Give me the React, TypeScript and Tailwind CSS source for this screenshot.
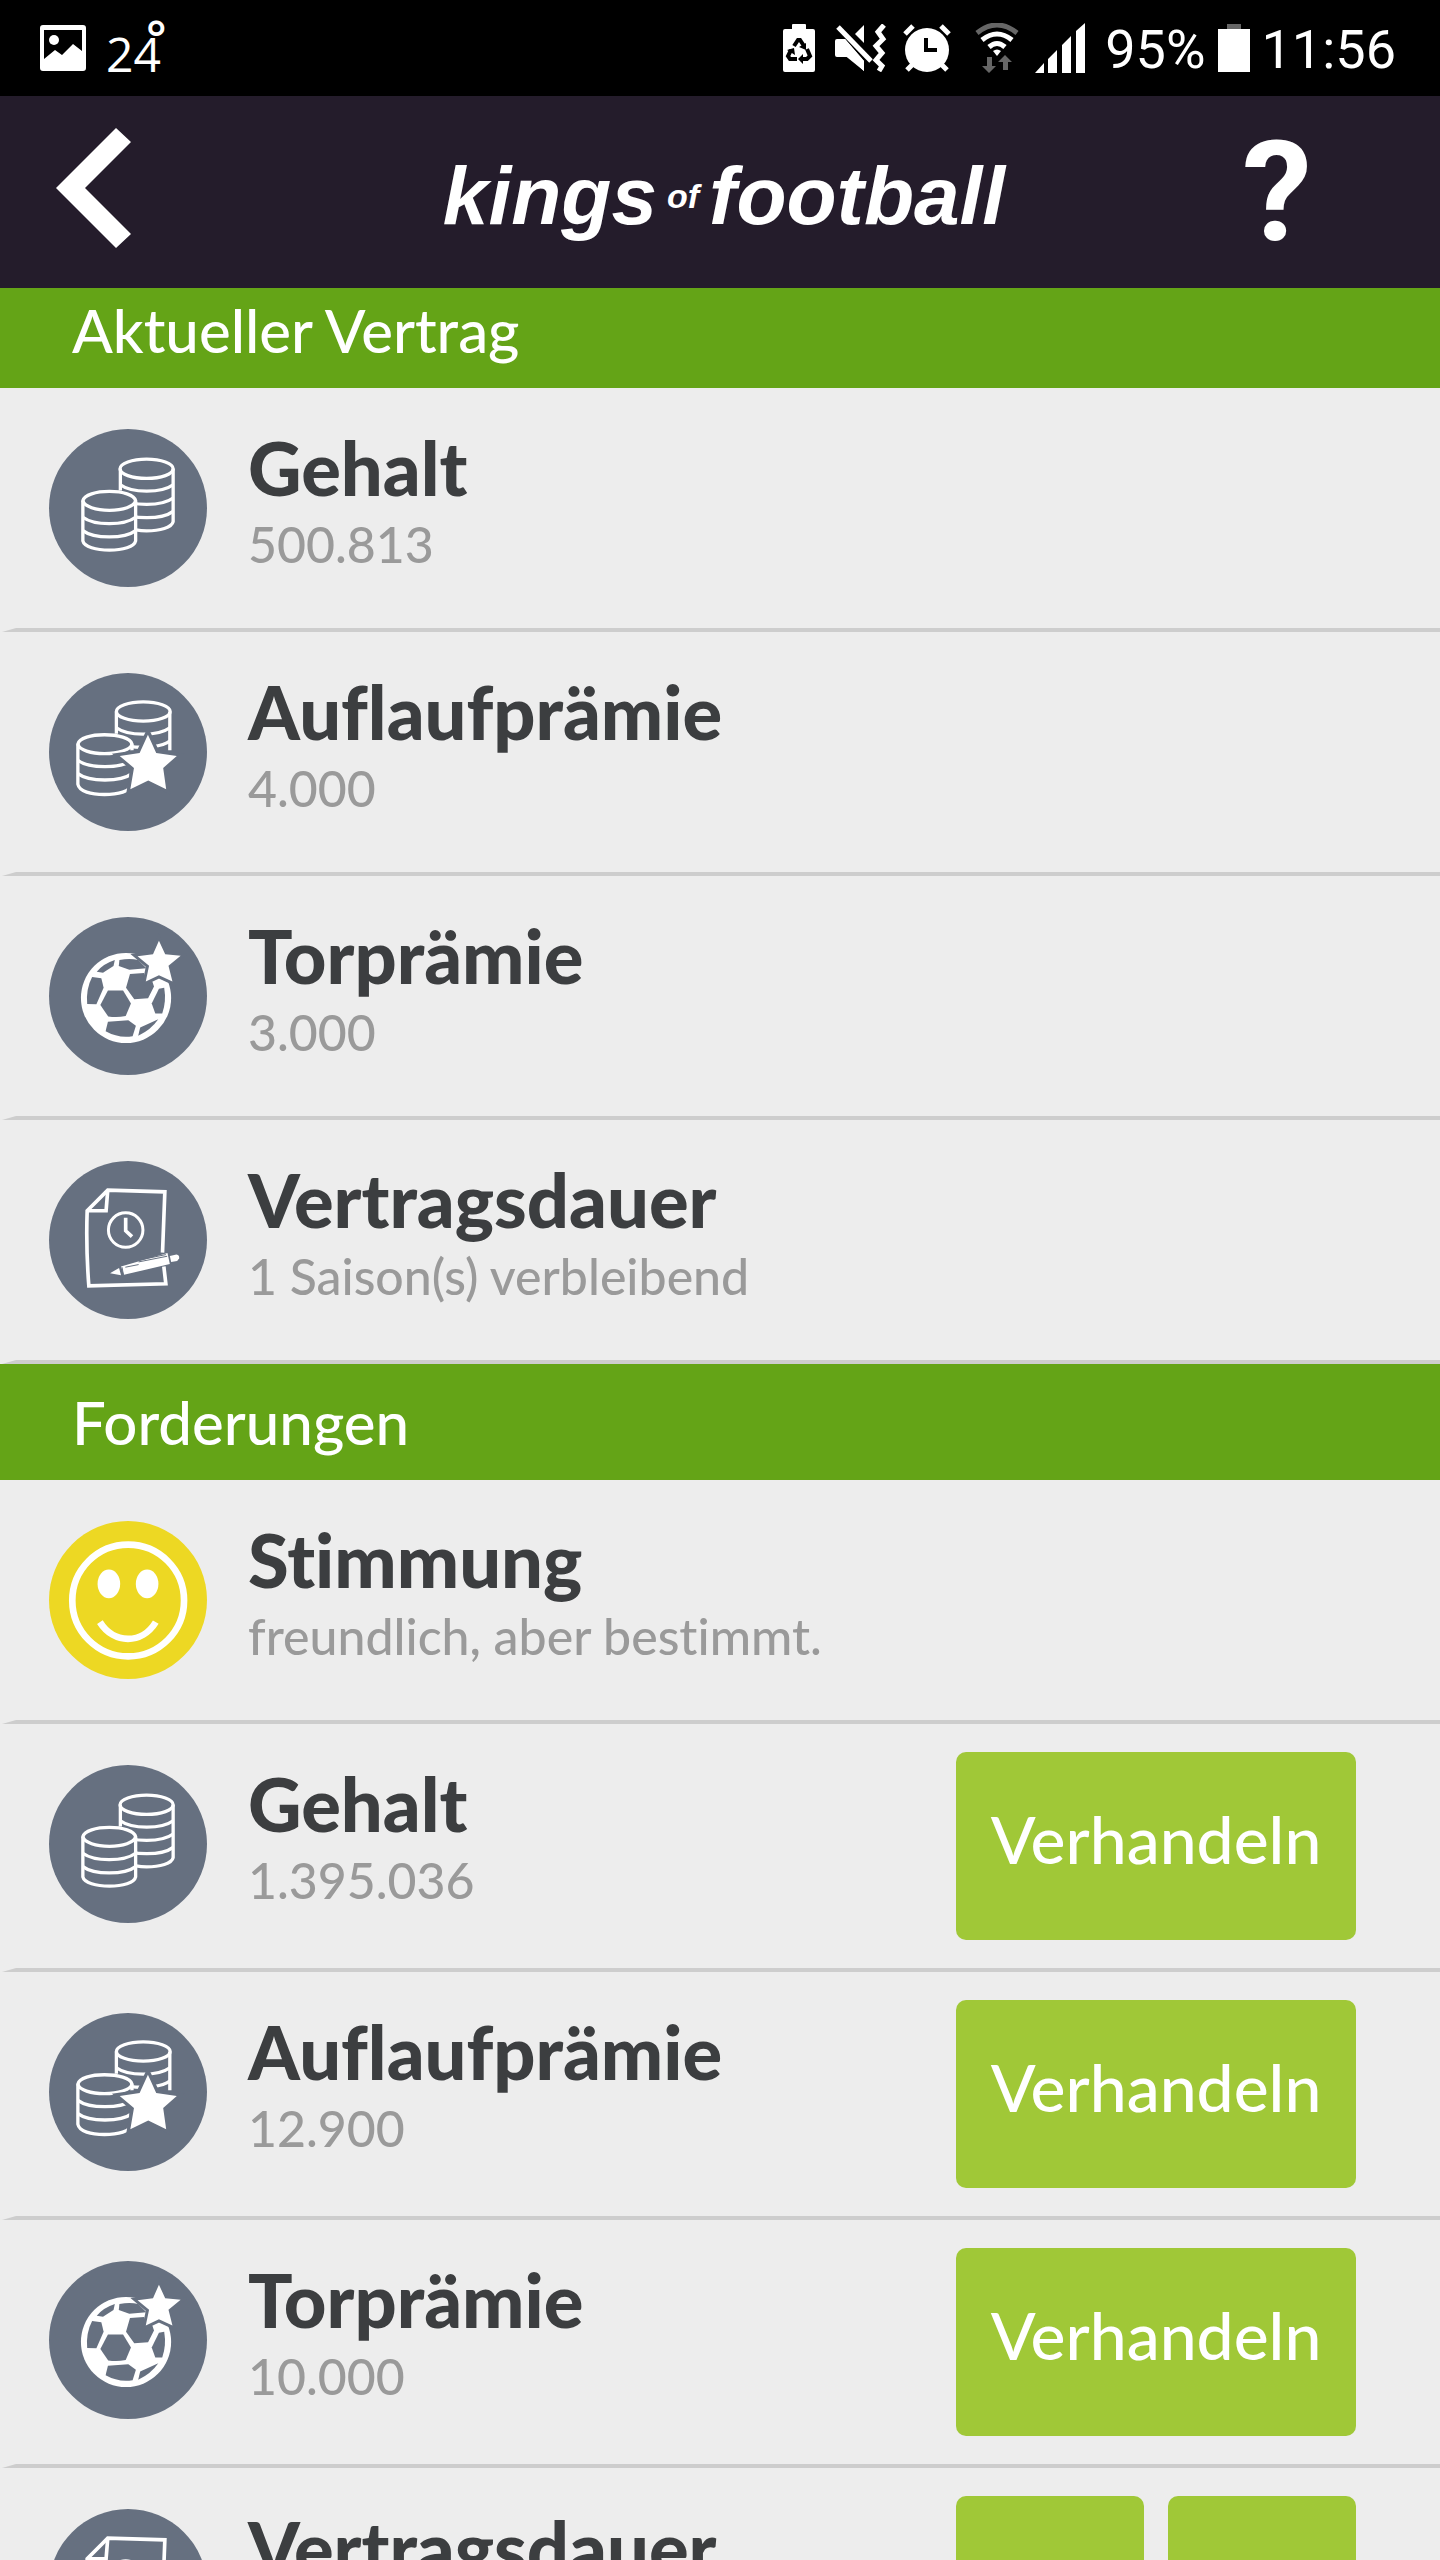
import type { ReactNode } from 'react';

type IconName = 'coins' | 'bonus' | 'goal' | 'contract' | 'mood';

type Entry = {
  icon: IconName;
  title: string;
  value?: string;
  action?: 'negotiate' | 'stepper';
};

const contract: Entry[] = [
  { icon: 'coins', title: 'Gehalt', value: '500.813' },
  { icon: 'bonus', title: 'Auflaufprämie', value: '4.000' },
  { icon: 'goal', title: 'Torprämie', value: '3.000' },
  {
    icon: 'contract',
    title: 'Vertragsdauer',
    value: '1 Saison(s) verbleibend',
  },
];

const demands: Entry[] = [
  { icon: 'mood', title: 'Stimmung', value: 'freundlich, aber bestimmt.' },
  { icon: 'coins', title: 'Gehalt', value: '1.395.036', action: 'negotiate' },
  {
    icon: 'bonus',
    title: 'Auflaufprämie',
    value: '12.900',
    action: 'negotiate',
  },
  { icon: 'goal', title: 'Torprämie', value: '10.000', action: 'negotiate' },
  { icon: 'contract', title: 'Vertragsdauer', action: 'stepper' },
];

function CoinsIcon() {
  return (
    <svg viewBox="56 55 476 476" className="size-full">
      <g fill="none" stroke="#fff" strokeWidth="10">
        <path d="M271 240V175M430 175V334C426 352 390 362 350 362 338 362 328 361 318 359" />
        <ellipse cx="350" cy="175" rx="80" ry="29" />
        <path d="M271 223a90 36 0 0 0 159 0M271 263a90 36 0 0 0 159 0M271 303a90 36 0 0 0 159 0" />
        <path
          fill="#667080"
          d="M158 271V392C162 410 198 420 238 420 278 420 313 410 317 392V271C313 253 278 243 238 243 198 243 162 253 158 271Z"
        />
        <path d="M158 271C162 289 198 300 238 300 278 300 313 289 317 271M158 321a90 36 0 0 0 159 0M158 361a90 36 0 0 0 159 0" />
      </g>
    </svg>
  );
}

function BonusIcon() {
  return (
    <svg viewBox="57 67 476 476" className="size-full">
      <g fill="none" stroke="#fff" strokeWidth="10">
        <path d="M260 250V184M421 184V300" />
        <ellipse cx="341" cy="183" rx="81" ry="29" />
        <path d="M260 232a91 36 0 0 0 161 0M300 288C340 294 400 290 421 272" />
        <path
          fill="#667080"
          d="M144 281V402C148 424 184 433 224 433 264 433 303 424 307 402V281C303 263 264 253 224 253 184 253 148 263 144 281Z"
        />
        <path d="M144 281C148 299 184 310 224 310 264 310 303 299 307 281M144 330a92 36 0 0 0 163 0M144 370a92 36 0 0 0 163 0" />
        <path stroke="#667080" strokeWidth="16" d="M307 300V410" />
      </g>
      <path
        fill="#fff"
        stroke="#667080"
        strokeWidth="20"
        paintOrder="stroke"
        d="M355 253 380 308 442 317 401 353 410 417 356 391 302 417 313 353 270 317 330 308Z"
      />
    </svg>
  );
}

function GoalIcon() {
  return (
    <svg viewBox="55 47 478 480" className="size-full">
      <circle cx="288" cy="293" r="137" fill="#fff" />
      <g fill="#667080">
        <path d="M199 213Q222 188 254 178L250 196 218 216Z" />
        <path d="M268 178Q300 171 325 178L350 203 298 207 266 196Z" />
        <path d="M185 229 213 233 220 262 198 312 170 311Q166 265 185 229Z" />
        <path d="M233 270H279L303 310 287 348Q260 353 234 349L210 314Z" />
        <path d="M300 220 343 217 350 243 368 243 373 258 355 294 313 297 288 262Z" />
        <path d="M388 265 404 262Q411 304 398 340L377 340 366 310Z" />
        <path d="M233 365 295 361 318 377 308 409Q265 416 226 394Z" />
        <path d="M331 383 386 358Q364 390 325 408Z" />
      </g>
      <path
        fill="#fff"
        stroke="#667080"
        strokeWidth="18"
        paintOrder="stroke"
        d="M388 119 407 160 454 165 417 195 429 243 388 224 348 243 358 195 323 166 370 160Z"
      />
    </svg>
  );
}

function ContractIcon() {
  return (
    <svg viewBox="56 60 476 476" className="size-full">
      <g fill="none" stroke="#fff" strokeWidth="11">
        <path d="M398 336 405 153 233 148 171 210Q167 320 176 436L408 430 402 378" />
        <path d="M233 148 228 210H171" />
        <circle cx="287" cy="268" r="52" strokeWidth="9" />
        <path d="M287 231V270L306 288" />
      </g>
      <g fill="#fff">
        <path d="M240 398 267 382 273 404Z" />
        <path d="M273 378 413 337 420 370 282 403Z" />
        <path d="M420 346 440 342Q450 344 448 354L442 361 424 364Z" />
      </g>
      <path
        fill="none"
        stroke="#667080"
        strokeWidth="3"
        d="M276 380 280 402M286 380 326 372M326 364 412 347M330 358 408 342"
      />
    </svg>
  );
}

function MoodIcon() {
  return (
    <svg viewBox="57 61 475 475" className="size-full">
      <g fill="none" stroke="#fff" strokeWidth="20">
        <circle cx="295" cy="300" r="168" />
        <path d="M210 365C252 432 337 432 378 365" />
      </g>
      <ellipse cx="237" cy="250" rx="34" ry="43" fill="#fff" />
      <ellipse cx="352" cy="250" rx="34" ry="43" fill="#fff" />
    </svg>
  );
}

const icons: Record<IconName, ReactNode> = {
  coins: <CoinsIcon />,
  bonus: <BonusIcon />,
  goal: <GoalIcon />,
  contract: <ContractIcon />,
  mood: <MoodIcon />,
};

function StatusBar() {
  return (
    <div className="flex h-24 shrink-0 items-center justify-between bg-black pr-11 pl-10 font-[Roboto,sans-serif] text-[54px] leading-none text-white">
      <div className="flex items-center gap-5">
        <svg viewBox="0 0 46 46" className="size-[46px]">
          <path
            fill="#fff"
            fillRule="evenodd"
            d="M3 0H43a3 3 0 0 1 3 3V43a3 3 0 0 1-3 3H3a3 3 0 0 1-3-3V3a3 3 0 0 1 3-3ZM4 5V34L15 25 22 30 33 19 42 26V5Z"
          />
          <circle cx="14" cy="15" r="5" fill="#fff" />
        </svg>
        <div className="relative pt-3 font-['Open_Sans',sans-serif] text-[48px] font-medium">
          24
          <span className="absolute -top-1 left-10 font-semibold">°</span>
        </div>
      </div>
      <div className="flex items-center gap-4">
        <svg viewBox="0 0 32 48" className="h-12 w-8">
          <path
            fill="#fff"
            d="M9 1Q9 0 10 0H22Q23 0 23 1V5H30Q32 5 32 7V46Q32 48 30 48H2Q0 48 0 46V7Q0 5 2 5H9Z"
          />
          <g fill="none" stroke="#000" strokeWidth="4">
            <path d="M11 22 15 16H17L21 22M24 25 27 32 24 35H18M14 35H7L5 32 8 26" />
          </g>
          <path
            fill="#000"
            d="M23 19V26L16 23ZM20 30V40L15 35ZM4 26 11 24 12 31Z"
          />
        </svg>
        <svg viewBox="0 0 52 48" className="ml-1 h-12 w-13">
          <g fill="#fff">
            <path d="M2 15H10L29 37V47L14 33H2Q0 33 0 31V17Q0 15 2 15Z" />
            <path d="M10 15 29 37V47L8 30Z" />
            <path d="M29 1V19L20 10Z" />
          </g>
          <path stroke="#fff" strokeWidth="5" d="M3 3 36 37" />
          <path
            fill="none"
            stroke="#fff"
            strokeWidth="5"
            d="M49 1 43 8 48 15 41 22 47 29 41 36 47 42 44 47"
          />
        </svg>
        <svg viewBox="0 0 48 48" className="size-12">
          <circle cx="24" cy="26" r="22" fill="#fff" />
          <g stroke="#fff" strokeWidth="5">
            <path d="M2 10 10 2M46 10 38 2M10 40 4 46M38 40 44 46" />
          </g>
          <path
            fill="none"
            stroke="#000"
            strokeWidth="4"
            d="M23 14V26H34"
          />
        </svg>
        <svg viewBox="0 0 44 50" className="ml-2 h-[50px] w-11">
          <g fill="none" strokeWidth="5">
            <path stroke="#666" d="M2 10Q22 -6 42 10" />
            <path stroke="#fff" d="M7 17Q22 5 37 17M14 24Q22 17 30 24" />
          </g>
          <path fill="#fff" d="M22 33 18 28Q22 25 26 28Z" />
          <path
            fill="#666"
            d="M12 34H17V43H21L14 50 7 43H12ZM28 47H33V39H37L30 32 23 39H28Z"
          />
        </svg>
        <svg viewBox="0 0 50 50" className="size-[50px]">
          <path
            fill="#fff"
            d="M0 50 9 40V50ZM13 36 22 27V50H13ZM27 22 36 13V50H27ZM41 8 50 0V50H41Z"
          />
        </svg>
        <div className="ml-1 flex items-center gap-3">
          <span className="pt-1">95%</span>
          <svg viewBox="0 0 32 48" className="h-12 w-8">
            <path fill="#666" d="M9 0H23V6H9Z" />
            <path fill="#fff" d="M0 5H32V48H0Z" />
          </svg>
          <span className="pt-1">11:56</span>
        </div>
      </div>
    </div>
  );
}

function Header() {
  return (
    <header className="grid h-48 shrink-0 grid-cols-[1fr_auto_1fr] items-center bg-[#241c2b] pr-12 pl-14 text-white">
      <button aria-label="Zurück" className="justify-self-start pb-2">
        <svg viewBox="0 0 75 120" className="h-[120px] w-[75px]">
          <path fill="#fff" d="M60 0 75 14 29 60 75 106 60 120 0 60Z" />
        </svg>
      </button>
      <h1 className="flex items-center gap-[10px] pt-2 font-['Liberation_Sans',Arial,sans-serif] text-[82px] leading-none font-bold italic">
        <span>kings</span>
        <span className="text-[34px]">of</span>
        <span>football</span>
      </h1>
      <button
        aria-label="Hilfe"
        className="mr-20 justify-self-end font-[Roboto,sans-serif] text-[140px] leading-none font-bold"
      >
        ?
      </button>
    </header>
  );
}

function SectionTitle({ children }: { children: ReactNode }) {
  return (
    <h2 className="flex h-[116px] items-center bg-[#64a417] px-18 text-[60px] leading-none font-medium text-white">
      {children}
    </h2>
  );
}

function Row({ entry }: { entry: Entry }) {
  return (
    <li>
      <div className="flex items-start pr-[84px] pl-[49px]">
        <div
          className={`mt-[41px] size-[158px] shrink-0 rounded-full ${
            entry.icon === 'mood' ? 'bg-[#edd823]' : 'bg-[#667080]'
          }`}
        >
          {icons[entry.icon]}
        </div>
        <div className="ml-[41px] h-60 flex-1 pt-10">
          <h3 className="text-[74px] leading-[80px] font-black text-[#3c3e40]">
            {entry.title}
          </h3>
          <p className="text-[50px] leading-[72px] font-medium text-[#9a9a9a]">
            {entry.value}
          </p>
        </div>
        {entry.action === 'negotiate' ? (
          <button className="my-7 h-[188px] w-[400px] rounded-[10px] bg-[#a0c837] pb-4 text-[66px] font-medium text-white">
            Verhandeln
          </button>
        ) : null}
        {entry.action === 'stepper' ? (
          <div className="my-7 flex gap-6">
            <button
              aria-label="Weniger"
              className="size-[188px] rounded-[10px] bg-[#a0c837]"
            />
            <button
              aria-label="Mehr"
              className="size-[188px] rounded-[10px] bg-[#a0c837]"
            />
          </div>
        ) : null}
      </div>
      <div className="h-1 bg-[#cdcdcd] [clip-path:polygon(16px_0,100%_0,100%_100%,2px_100%)]" />
    </li>
  );
}

export default function App() {
  return (
    <div className="flex h-screen flex-col overflow-hidden bg-[#ededed] font-[Lato,sans-serif] [font-variant-ligatures:none]">
      <StatusBar />
      <Header />
      {/* the list starts slightly scrolled under the header */}
      <main className="min-h-0 flex-1 overflow-hidden">
        <section className="-mt-4">
          <SectionTitle>Aktueller Vertrag</SectionTitle>
          <ul>
            {contract.map((entry) => (
              <Row key={`contract-${entry.title}`} entry={entry} />
            ))}
          </ul>
        </section>
        <section>
          <SectionTitle>Forderungen</SectionTitle>
          <ul>
            {demands.map((entry) => (
              <Row key={`demand-${entry.title}`} entry={entry} />
            ))}
          </ul>
        </section>
      </main>
    </div>
  );
}
